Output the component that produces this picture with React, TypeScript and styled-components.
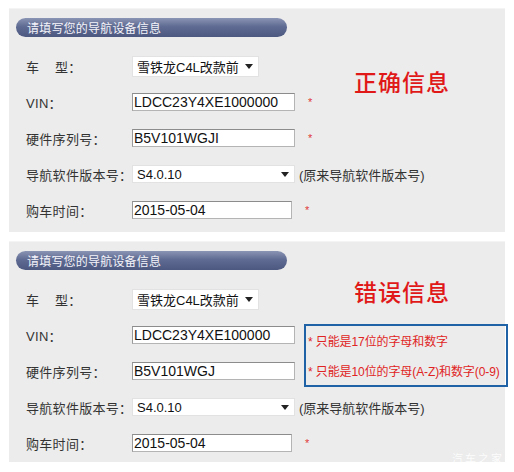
import React from "react";
import styled, { createGlobalStyle } from "styled-components";

const Global = createGlobalStyle`
  html, body { margin: 0; padding: 0; background: #ffffff; }
  body { font-family: "Liberation Sans", "Noto Sans CJK SC", sans-serif; }
`;

const Page = styled.div`
  position: relative;
  width: 514px;
  height: 472px;
  padding: 8px 9px 0 9px;
  box-sizing: border-box;
  display: flex;
  flex-direction: column;
  gap: 9px;
`;

const Panel = styled.div<{ $pb: number }>`
  position: relative;
  width: 496px;
  background: #ececec;
  border-top: 1px solid #f4f4f4;
  box-sizing: border-box;
  padding: 9px 0 ${(p) => p.$pb}px 7px;
  display: flex;
  flex-direction: column;
  gap: 11px;
`;

const Header = styled.div`
  width: 271px;
  height: 19px;
  border-radius: 10px;
  background: linear-gradient(#8a94b4 0%, #5f6b92 45%, #4c5880 100%);
  color: #f4f4fa;
  font-family: "Noto Sans CJK SC", sans-serif;
  font-size: 12px;
  line-height: 19px;
  padding-left: 11px;
  box-sizing: border-box;
  letter-spacing: 0.2px;
`;

const Rows = styled.div`
  display: flex;
  flex-direction: column;
`;

const Row = styled.div`
  height: 36px;
  display: flex;
  align-items: center;
  padding-left: 10px;
`;

const Label = styled.div`
  width: 106px;
  flex: none;
  font-size: 13px;
  color: #333;
  letter-spacing: 0.3px;
  white-space: pre;
`;

const TextBox = styled.div<{ $w: number }>`
  width: ${(p) => p.$w}px;
  height: 18px;
  box-sizing: border-box;
  background: #fff;
  border: 1px solid #b4b4b4;
  border-top-color: #8c8c8c;
  border-left-color: #9a9a9a;
  font-family: "Liberation Sans", Arial, sans-serif;
  font-size: 14px;
  line-height: 16px;
  color: #111;
  padding-left: 1px;
  flex: none;
  white-space: nowrap;
  overflow: hidden;
`;

const SelectBox = styled.div<{ $w: number; $h: number }>`
  width: ${(p) => p.$w}px;
  height: ${(p) => p.$h}px;
  box-sizing: border-box;
  background: #fff;
  border: 1px solid #e2e2e2;
  display: flex;
  align-items: center;
  justify-content: space-between;
  padding: 0 5px 0 4px;
  color: #111;
  flex: none;
  white-space: nowrap;
`;

const SelectText = styled.span<{ $size: number }>`
  font-family: "Liberation Sans", "Noto Sans CJK SC", sans-serif;
  font-size: ${(p) => p.$size}px;
`;

const Arrow = styled.span`
  width: 0;
  height: 0;
  border-left: 4px solid transparent;
  border-right: 4px solid transparent;
  border-top: 5px solid #222;
`;

const Star = styled.span`
  color: #e03a3a;
  font-family: "Liberation Sans", Arial, sans-serif;
  font-size: 11px;
  margin-left: 13px;
`;

const Hint = styled.span`
  font-size: 13px;
  color: #333;
  margin-left: 4px;
  white-space: nowrap;
`;

const Title = styled.div<{ $top: number }>`
  position: absolute;
  left: 345px;
  top: ${(p) => p.$top}px;
  font-family: "Noto Sans CJK SC", sans-serif;
  font-size: 23px;
  color: #e01818;
  letter-spacing: 1px;
  font-weight: 500;
`;

const ErrorBox = styled.div`
  position: absolute;
  left: 295px;
  top: 82px;
  width: 204px;
  height: 63px;
  box-sizing: border-box;
  border: 2px solid #1f62a6;
  display: flex;
  flex-direction: column;
  justify-content: space-around;
  padding: 0 0 0 2px;
`;

const ErrorLine = styled.div`
  font-size: 12px;
  color: #e02424;
  white-space: nowrap;
  letter-spacing: -0.1px;
`;

const Watermark = styled.div`
  position: absolute;
  right: 10px;
  bottom: 6px;
  font-family: "Noto Sans CJK SC", sans-serif;
  font-size: 11px;
  color: rgba(255, 255, 255, 0.85);
  letter-spacing: 2px;
`;

type Props = { wrong?: boolean };

function Form({ wrong }: Props) {
  return (
    <Panel $pb={wrong ? 1 : 4}>
      <Header>请填写您的导航设备信息</Header>
      <Rows>
        <Row>
          <Label>{"车    型："}</Label>
          <SelectBox $w={127} $h={21}>
            <SelectText $size={13}>雪铁龙C4L改款前</SelectText>
            <Arrow />
          </SelectBox>
        </Row>
        <Row>
          <Label>VIN：</Label>
          <TextBox $w={163}>{wrong ? "LDCC23Y4XE100000" : "LDCC23Y4XE1000000"}</TextBox>
          {!wrong && <Star>*</Star>}
        </Row>
        <Row>
          <Label>硬件序列号：</Label>
          <TextBox $w={163}>{wrong ? "B5V101WGJ" : "B5V101WGJI"}</TextBox>
          {!wrong && <Star>*</Star>}
        </Row>
        <Row>
          <Label>导航软件版本号：</Label>
          <SelectBox $w={163} $h={18}>
            <SelectText $size={13}>S4.0.10</SelectText>
            <Arrow />
          </SelectBox>
          <Hint>(原来导航软件版本号)</Hint>
        </Row>
        <Row>
          <Label>购车时间：</Label>
          <TextBox $w={160}>2015-05-04</TextBox>
          <Star>*</Star>
        </Row>
      </Rows>
      <Title $top={wrong ? 32 : 55}>{wrong ? "错误信息" : "正确信息"}</Title>
      {wrong && (
        <ErrorBox>
          <ErrorLine>* 只能是17位的字母和数字</ErrorLine>
          <ErrorLine>* 只能是10位的字母(A-Z)和数字(0-9)</ErrorLine>
        </ErrorBox>
      )}
    </Panel>
  );
}

export default function App() {
  return (
    <>
      <Global />
      <Page>
        <Form />
        <Form wrong />
        <Watermark>汽车之家</Watermark>
      </Page>
    </>
  );
}
